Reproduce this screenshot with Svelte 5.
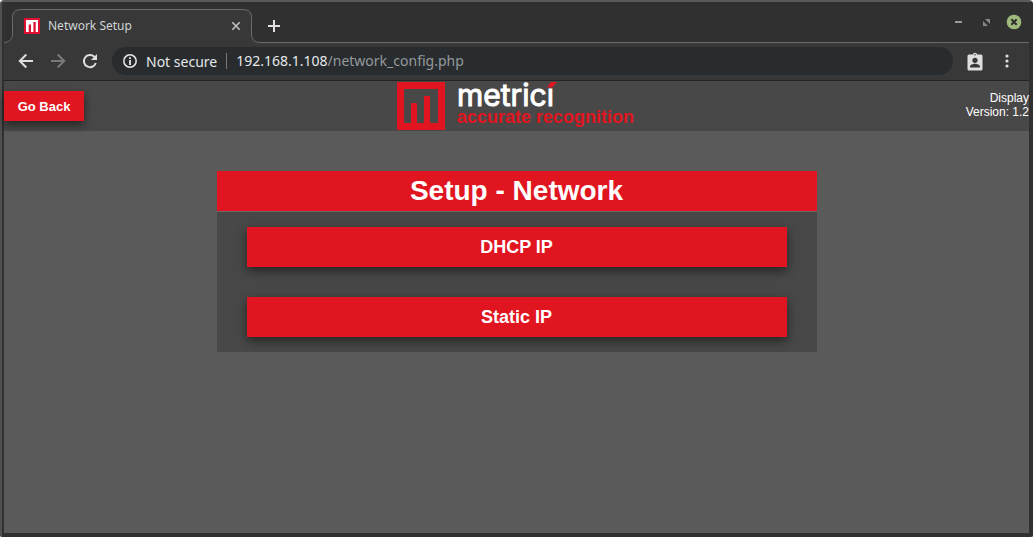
<script>
  const host = '192.168.1.108';
  const path = '/network_config.php';
  const modes = ['DHCP IP', 'Static IP'];
</script>

<div class="window">
  <header class="tabs">
    <div class="tab">
      <svg class="outline" width="256" height="34" viewBox="0 0 256 34" aria-hidden="true">
        <path d="M0 34V33.5C5 33.500 8.500 30 8.500 25V8.500Q8.500 .500 16.500 .500H239.500Q247.500 .500 247.500 8.500V25Q247.500 33.500 256 33.500V34Z" fill="#383838" />
        <path d="M0 33.500C5 33.500 8.500 30 8.500 25V8.500Q8.500 .500 16.500 .500H239.500Q247.500 .500 247.500 8.500V25Q247.500 33.500 256 33.500" fill="none" stroke="#6b6b6b" />
      </svg>
      <svg class="favicon" width="16" height="16" viewBox="0 0 16 16" aria-hidden="true">
        <path fill="#df1030" d="M0 0h16v16H0z" />
        <path fill="#fff" d="M2 2h12v12h-2.300V4H9.400v10H7V6.500H4.700V14H2z" />
      </svg>
      <span class="title">Network Setup</span>
      <button class="close" aria-label="Close tab">
        <svg width="10" height="10" viewBox="0 0 10 10"><path d="M1.300 1.300l7.400 7.400M8.700 1.300L1.300 8.700" stroke="#c0c0c0" stroke-width="1.600" /></svg>
      </button>
    </div>
    <button class="new" aria-label="New tab">
      <svg width="12" height="12" viewBox="0 0 12 12"><path d="M6 0v12M0 6h12" stroke="#e4dede" stroke-width="2" /></svg>
    </button>
    <div class="controls">
      <button aria-label="Minimize"><svg width="16" height="16" viewBox="0 0 16 16"><path d="M5 8h7" stroke="#999" stroke-width="2" /></svg></button>
      <button aria-label="Restore"><svg width="16" height="16" viewBox="0 0 16 16"><path d="M7 5h5v5zM5 7v5h5z" fill="#888" /></svg></button>
      <button aria-label="Close"><svg width="16" height="16" viewBox="0 0 16 16"><circle cx="8" cy="8" r="7.300" fill="#9fbb7c" /><path d="M5.300 5.300l5.400 5.400M10.700 5.300l-5.400 5.400" stroke="#303030" stroke-width="2" /></svg></button>
    </div>
  </header>

  <nav class="toolbar" aria-label="Browser">
    <button aria-label="Back"><svg width="16" height="16" viewBox="0 0 16 16"><path d="M15 8H2M8.300 1.500L1.800 8l6.500 6.500" fill="none" stroke="#dedede" stroke-width="2" /></svg></button>
    <button aria-label="Forward"><svg width="16" height="16" viewBox="0 0 16 16"><path d="M1 8h13M7.700 1.500L14.200 8l-6.500 6.500" fill="none" stroke="#7a7a7a" stroke-width="2" /></svg></button>
    <button aria-label="Reload"><svg width="16" height="16" viewBox="0 0 16 16"><path d="M13.800 10A6.100 6.100 0 1 1 12.300 3.700L13.500 5" fill="none" stroke="#dedede" stroke-width="2" /><path d="M15 1v6H9z" fill="#dedede" /></svg></button>
    <div class="address">
      <svg width="14" height="14" viewBox="0 0 14 14" aria-hidden="true"><circle cx="7" cy="7" r="6.200" fill="none" stroke="#e8e8e8" stroke-width="1.500" /><path d="M7 3.200v1.700M7 6v5" stroke="#e8e8e8" stroke-width="1.800" /></svg>
      <span class="security">Not secure</span>
      <span class="url">{host}<span class="path">{path}</span></span>
    </div>
    <button class="profile" aria-label="Profile"><svg width="16" height="19" viewBox="0 0 16 19"><path d="M2 2.500h3.700a2.400 2.400 0 0 1 4.600 0H14A1.500 1.500 0 0 1 15.500 4v13A1.500 1.500 0 0 1 14 18.500H2A1.500 1.500 0 0 1 .500 17V4A1.500 1.500 0 0 1 2 2.500z" fill="#dedede" /><circle cx="8" cy="2.800" r=".8" fill="#383838" /><circle cx="8" cy="8.300" r="2.600" fill="#383838" /><path d="M3 15.500v-1c0-1.700 3.300-2.700 5-2.700s5 1 5 2.700v1z" fill="#383838" /></svg></button>
    <button class="menu" aria-label="Menu"><svg width="4" height="14" viewBox="0 0 4 14"><g fill="#dedede"><circle cx="2" cy="2" r="1.600" /><circle cx="2" cy="7" r="1.600" /><circle cx="2" cy="12" r="1.600" /></g></svg></button>
  </nav>

  <div class="page">
    <header class="banner">
      <button class="red back">Go Back</button>
      <div class="logo">
        <svg width="48" height="48" viewBox="0 0 48 48" aria-hidden="true">
          <path d="M0 0h48v48H0zM7 7v34h7V21h6v20h7V14h6v27h8V7z" fill="#e11520" fill-rule="evenodd" />
        </svg>
        <div class="wordmark">
          <span class="name">metricı<svg class="accent" width="11" height="6" viewBox="0 0 11 6" aria-hidden="true"><path d="M1 5.500L5 0H11L6 5.500z" fill="#e11520" /></svg></span>
          <span class="tagline">accurate recognition</span>
        </div>
      </div>
      <div class="version">Display<br />Version: 1.2</div>
    </header>
    <main>
      <section class="card">
        <h1>Setup - Network</h1>
        <div class="choices">
          {#each modes as mode}
            <button class="red choice">{mode}</button>
          {/each}
        </div>
      </section>
    </main>
  </div>
</div>

<style>
  :global(body) { margin: 0; background: #fff; }
  .window {
    box-sizing: border-box;
    min-height: 100vh;
    display: flex;
    flex-direction: column;
    padding: 0 2px 2px;
    border: 2px solid #303030;
    border-top: 2px solid #5a5a5a;
    border-left-color: #505050;
    border-radius: 4px 4px 2px 2px;
    background: #303030;
    font-family: "Liberation Sans", Arial, sans-serif;
  }
  button { font: inherit; border: 0; padding: 0; margin: 0; background: none; cursor: pointer; }
  svg { display: block; flex-shrink: 0; }
  .tabs {
    display: flex;
    align-items: center;
    height: 40px;
    border-bottom: 1px solid #6b6b6b;
  }
  .tab {
    position: relative;
    box-sizing: border-box;
    align-self: flex-end;
    display: flex;
    align-items: center;
    gap: 8px;
    width: 248px;
    height: 33px;
    padding: 0 10px 0 20px;
    color: #d0d4d6;
    font: 12px "Noto Sans", sans-serif;
  }
  .outline { position: absolute; left: 0; top: 0; }
  .favicon, .title, .close { position: relative; }
  .title { flex: 1; }
  .close { padding: 1px; }
  .new { margin: 8px 0 0 12px; padding: 4px; }
  .controls { display: flex; gap: 12px; margin-left: auto; padding-right: 7px; }
  .toolbar {
    display: flex;
    align-items: center;
    height: 36px;
    padding: 0 18px 1px 14px;
    border-bottom: 1px solid #242424;
    background: #383838;
  }
  .toolbar > button { margin-right: 16px; }
  .toolbar > .profile { margin: 0 20px 0 14px; }
  .toolbar > .menu { margin: 0; padding: 0 2px; }
  .address {
    flex: 1;
    display: flex;
    align-items: center;
    height: 28px;
    margin-left: -2px;
    padding-left: 11px;
    border-radius: 14px;
    background: #282c2f;
    color: #e6e8e9;
    font: 14px "Noto Sans", sans-serif;
  }
  .security { margin: 0 9px 0 9px; }
  .url { padding-left: 9px; border-left: 1px solid #74787a; line-height: 16px; }
  .path { color: #94999c; }
  .page { flex: 1; background: #5a5a5a; }
  .banner {
    display: grid;
    grid-template-columns: 1fr auto 1fr;
    align-items: center;
    height: 50px;
    background: #484848;
    color: #fff;
  }
  .red { background: #e11520; color: #fff; font-weight: bold; box-shadow: 0 4px 10px rgba(0, 0, 0, 0.5); }
  .back { justify-self: start; min-width: 80px; height: 30px; padding: 0 12px; font-size: 13px; }
  .logo { display: flex; gap: 12px; padding-right: 2px; }
  .wordmark { display: flex; flex-direction: column; }
  .name {
    position: relative;
    align-self: flex-start;
    font: 30px/26px Inter, sans-serif;
    -webkit-text-stroke: 1px #fff;
  }
  .accent { position: absolute; right: -3px; top: 0; }
  .tagline { color: #e11520; font-size: 18px; font-weight: bold; line-height: 18px; }
  .version { padding-bottom: 2px; text-align: right; font-size: 12px; line-height: 14px; }
  main { padding: 40px 16px; }
  .card { max-width: 600px; margin: 0 auto; background: #484848; }
  h1 {
    margin: 0;
    border-bottom: 1px solid #6b6b6b;
    background: #e11520;
    color: #fff;
    font-size: 28px;
    line-height: 40px;
    text-align: center;
  }
  .choices { display: flex; flex-direction: column; gap: 30px; padding: 15px 30px; }
  .choice { height: 40px; font-size: 18px; }
</style>
